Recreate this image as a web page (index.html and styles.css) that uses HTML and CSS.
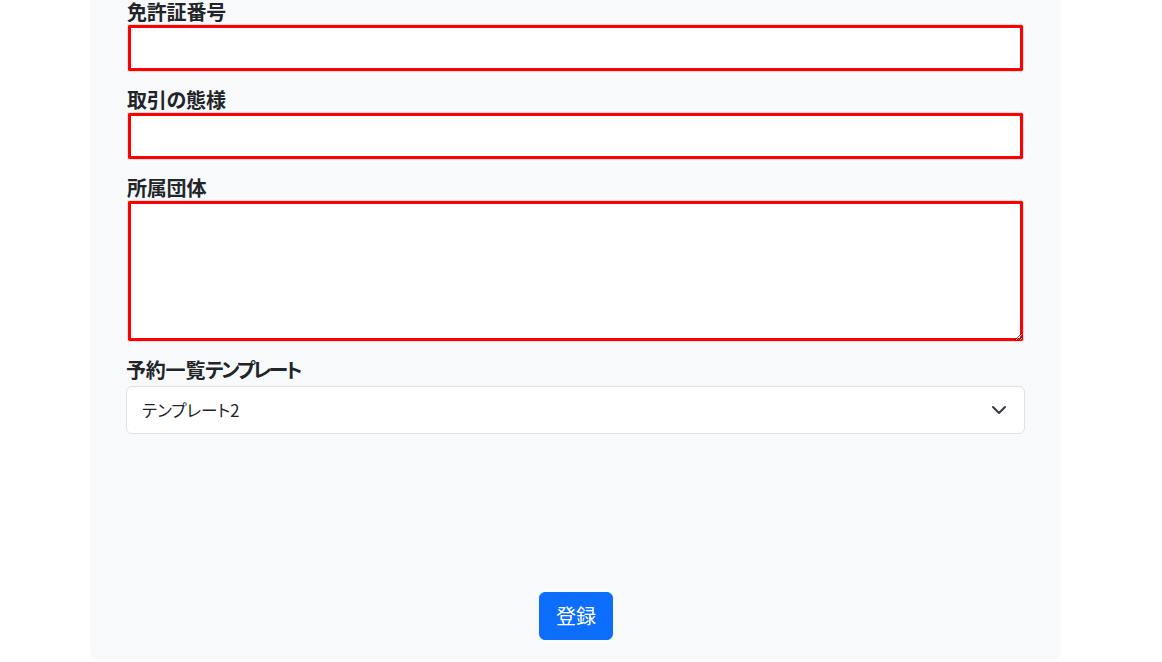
FILE: index.html
```html
<!DOCTYPE html>
<html lang="ja">
<head>
<meta charset="utf-8">
<title>登録</title>
<link rel="stylesheet" href="styles.css">
</head>
<body>
<div class="panel">
  <form class="form">
    <div class="field">
      <label class="label" for="license">免許証番号</label>
      <input class="control invalid" id="license" type="text">
    </div>
    <div class="field">
      <label class="label" for="mode">取引の態様</label>
      <input class="control invalid" id="mode" type="text">
    </div>
    <div class="field">
      <label class="label" for="group">所属団体</label>
      <textarea class="control invalid area" id="group"></textarea>
    </div>
    <div class="field">
      <label class="label label-select" for="tpl">予約一覧<span class="kana">テンプレート</span></label>
      <select class="select" id="tpl">
        <option>テンプレート1</option>
        <option selected>テンプレート2</option>
      </select>
    </div>
    <div class="actions">
      <button class="btn" type="button">登録</button>
    </div>
  </form>
</div>
</body>
</html>
```

FILE: styles.css
```css
html, body {
  margin: 0;
  padding: 0;
  background: #ffffff;
}
body {
  font-family: "Noto Sans CJK JP", "Noto Sans", sans-serif;
  color: #212529;
  height: 662px;
  overflow: hidden;
}
.panel {
  width: 971px;
  margin-left: 90px;
  background: #f8f9fa;
  border-radius: 0 0 8px 8px;
  padding: 1px 36px 20px 36px;
  box-sizing: border-box;
}
.form {
  display: flex;
  flex-direction: column;
  margin-top: -1px;
}
.field {
  display: flex;
  flex-direction: column;
  margin-bottom: 16px;
}
.label {
  font-size: 20px;
  font-weight: 700;
  line-height: 24px;
  height: 24px;
  font-feature-settings: "palt";
  letter-spacing: -0.2px;
  padding-left: 1px;
}
.label-select {
  margin-bottom: 4px;
  padding-left: 0;
}
.kana {
  letter-spacing: -2.4px;
}
.control {
  display: block;
  box-sizing: border-box;
  width: 897px;
  margin-left: 1px;
  height: 48px;
  border: 1px solid #dee2e6;
  border-radius: 2px;
  background: #ffffff;
  box-shadow: inset 0 0 0 3px #ff0000;
  font: inherit;
  font-size: 16px;
  padding: 6px 12px;
}
.control:focus {
  outline: none;
}
.area {
  height: 142px;
  resize: vertical;
}
.select {
  display: block;
  box-sizing: border-box;
  width: 899px;
  height: 48px;
  border: 1px solid #dee2e6;
  border-radius: 6px;
  background-color: #ffffff;
  background-image: url("data:image/svg+xml,%3csvg xmlns='http://www.w3.org/2000/svg' viewBox='0 0 16 16'%3e%3cpath fill='none' stroke='%23343a40' stroke-linecap='round' stroke-linejoin='round' stroke-width='2' d='m2 5 6 6 6-6'/%3e%3c/svg%3e");
  background-repeat: no-repeat;
  background-position: right 17px center;
  background-size: 16px 16px;
  appearance: none;
  -webkit-appearance: none;
  font-family: "Noto Sans CJK JP", "Noto Sans", sans-serif;
  font-size: 16.6px;
  font-feature-settings: "palt";
  color: #212529;
  padding: 0 40px 0 15px;
  margin-bottom: 142px;
}
.actions {
  display: flex;
  justify-content: center;
}
.btn {
  box-sizing: border-box;
  height: 48px;
  padding: 0 16px;
  font-family: "Noto Sans CJK JP", "Noto Sans", sans-serif;
  font-size: 20px;
  line-height: 1;
  color: #ffffff;
  background: #0d6efd;
  border: 1px solid #0d6efd;
  border-radius: 6px;
  margin-left: 1px;
}
```
